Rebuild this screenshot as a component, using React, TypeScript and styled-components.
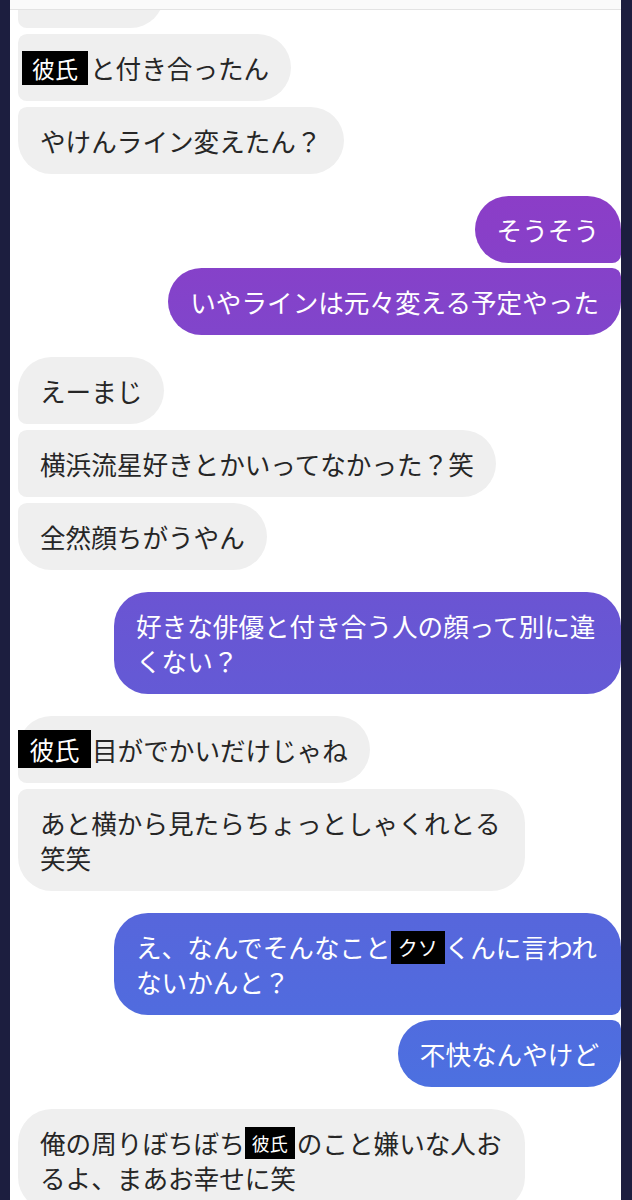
import React from "react";
import styled, { createGlobalStyle } from "styled-components";

type Side = "in" | "out";

const GlobalStyle = createGlobalStyle`
  html, body {
    margin: 0;
    padding: 0;
    background: #1c1e3f;
  }
  body {
    font-family: "Noto Sans CJK JP", "Noto Sans", sans-serif;
  }
`;

const Frame = styled.div`
  display: flex;
  height: 1200px;
  padding: 0 11px 0 10px;
  box-sizing: border-box;
  background: #1c1e3f;
`;

const Panel = styled.main`
  flex: 1;
  display: flex;
  flex-direction: column;
  background: #ffffff;
  overflow: hidden;
`;

const TopBar = styled.header`
  flex: none;
  height: 9px;
  background: #fafafa;
  border-bottom: 1px solid #e3e3e3;
`;

const Viewport = styled.div`
  flex: 1;
  overflow: hidden;
`;

const Thread = styled.div`
  display: flex;
  flex-direction: column;
  gap: 22px;
  margin-top: -49px;
  padding-left: 8px;
`;

const Group = styled.div<{ $side: Side }>`
  display: flex;
  flex-direction: column;
  align-items: ${(p) => (p.$side === "in" ? "flex-start" : "flex-end")};
  gap: ${(p) => (p.$side === "in" ? 6 : 5)}px;
`;

const BIG = 34;
const SMALL = 9;

const Bubble = styled.div<{ $side: Side; $first: boolean; $last: boolean }>`
  box-sizing: border-box;
  max-width: 507px;
  padding: 16px 22px;
  font-size: 25.6px;
  line-height: 35px;
  font-weight: 400;
  color: ${(p) => (p.$side === "in" ? "#262626" : "#ffffff")};
  background-color: #efefef;
  background-image: ${(p) =>
    p.$side === "out"
      ? "linear-gradient(180deg, #9a34c4 0px, #893fc8 230px, #6757d4 640px, #4f6ddf 1040px, #4678e3 1200px)"
      : "none"};
  background-attachment: fixed;
  border-radius: ${(p) =>
    p.$side === "in"
      ? `${p.$first ? BIG : SMALL}px ${BIG}px ${BIG}px ${p.$last ? BIG : SMALL}px`
      : `${BIG}px ${p.$first ? BIG : SMALL}px ${p.$last ? BIG : SMALL}px ${BIG}px`};
`;

const ClippedBubble = styled(Bubble)`
  width: 146px;
  height: 67px;
`;

const Chunk = styled.span``;

const Redact = styled.span<{
  $w: number;
  $h: number;
  $mt: number;
  $ml: number;
  $mr: number;
  $fs: number;
}>`
  display: inline-block;
  vertical-align: top;
  box-sizing: border-box;
  width: ${(p) => p.$w}px;
  height: ${(p) => p.$h}px;
  margin: ${(p) => `${p.$mt}px ${p.$mr}px ${35 - p.$h - p.$mt}px ${p.$ml}px`};
  background: #000000;
  color: #ffffff;
  font-size: ${(p) => p.$fs}px;
  font-weight: 400;
  line-height: ${(p) => p.$h}px;
  text-align: center;
`;

type Msg = React.ReactNode;
type GroupData = { side: Side; items: Msg[] };

const groups: GroupData[] = [
  {
    side: "in",
    items: [
      null,
      <>
        <Redact $w={66} $h={34} $mt={1} $ml={-18} $mr={2} $fs={23}>
          彼氏
        </Redact>
        <Chunk>と付き合ったん</Chunk>
      </>,
      "やけんライン変えたん？",
    ],
  },
  { side: "out", items: ["そうそう", "いやラインは元々変える予定やった"] },
  {
    side: "in",
    items: ["えーまじ", "横浜流星好きとかいってなかった？笑", "全然顔ちがうやん"],
  },
  { side: "out", items: ["好きな俳優と付き合う人の顔って別に違くない？"] },
  {
    side: "in",
    items: [
      <>
        <Redact $w={73} $h={38} $mt={-2} $ml={-22} $mr={1} $fs={25}>
          彼氏
        </Redact>
        <Chunk>目がでかいだけじゃね</Chunk>
      </>,
      "あと横から見たらちょっとしゃくれとる笑笑",
    ],
  },
  {
    side: "out",
    items: [
      <>
        <Chunk>え、なんでそんなこと</Chunk>
        <Redact $w={54} $h={33} $mt={2} $ml={0} $mr={0} $fs={20}>
          クソ
        </Redact>
        <Chunk>くんに言われ</Chunk>
        <Chunk>ないかんと？</Chunk>
      </>,
      "不快なんやけど",
    ],
  },
  {
    side: "in",
    items: [
      <>
        <Chunk>俺の周りぼちぼち</Chunk>
        <Redact $w={50} $h={32} $mt={2} $ml={0} $mr={2} $fs={18}>
          彼氏
        </Redact>
        <Chunk>のこと嫌いな人お</Chunk>
        <Chunk>るよ、まあお幸せに笑</Chunk>
      </>,
    ],
  },
];

export default function App() {
  return (
    <>
      <GlobalStyle />
      <Frame>
        <Panel>
          <TopBar />
          <Viewport>
            <Thread lang="ja">
              {groups.map((g, gi) => (
                <Group key={gi} $side={g.side}>
                  {g.items.map((m, i) => {
                    const first = i === 0;
                    const last = i === g.items.length - 1;
                    return m === null ? (
                      <ClippedBubble
                        key={i}
                        $side={g.side}
                        $first={first}
                        $last={last}
                        aria-hidden
                      />
                    ) : (
                      <Bubble key={i} $side={g.side} $first={first} $last={last}>
                        {m}
                      </Bubble>
                    );
                  })}
                </Group>
              ))}
            </Thread>
          </Viewport>
        </Panel>
      </Frame>
    </>
  );
}
